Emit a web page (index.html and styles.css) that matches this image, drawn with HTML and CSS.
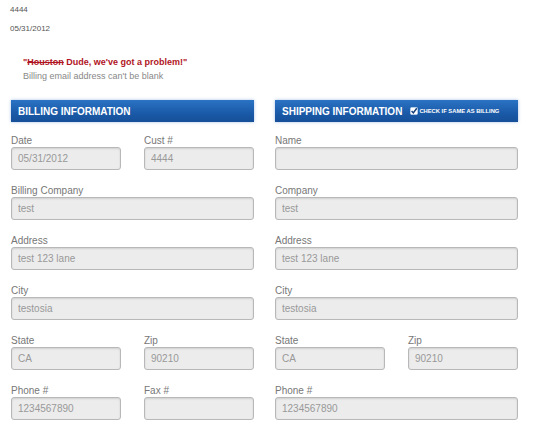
FILE: index.html
```html
<!DOCTYPE html>
<html>
<head>
<meta charset="utf-8">
<link rel="stylesheet" href="styles.css">
</head>
<body>
<div class="top">
  <div class="meta">4444</div>
  <div class="meta">05/31/2012</div>
</div>
<div class="error">
  <div class="error-title">"<span class="strike">Houston</span> Dude, we've got a problem!"</div>
  <div class="error-msg">Billing email address can't be blank</div>
</div>
<div class="columns">
  <section class="col">
    <div class="header"><span class="htitle">BILLING INFORMATION</span></div>
    <div class="fields">
      <div class="row two">
        <div class="field"><label>Date</label><div class="input">05/31/2012</div></div>
        <div class="field"><label>Cust #</label><div class="input">4444</div></div>
      </div>
      <div class="field"><label>Billing Company</label><div class="input">test</div></div>
      <div class="field"><label>Address</label><div class="input">test 123 lane</div></div>
      <div class="field"><label>City</label><div class="input">testosia</div></div>
      <div class="row two">
        <div class="field"><label>State</label><div class="input">CA</div></div>
        <div class="field"><label>Zip</label><div class="input">90210</div></div>
      </div>
      <div class="row two">
        <div class="field"><label>Phone #</label><div class="input">1234567890</div></div>
        <div class="field"><label>Fax #</label><div class="input"></div></div>
      </div>
    </div>
  </section>
  <section class="col">
    <div class="header">
      <span class="htitle">SHIPPING INFORMATION</span>
      <span class="same">
        <svg class="cb" width="8" height="8" viewBox="0 0 8 8"><rect x="0.5" y="0.5" width="7" height="7" rx="1" fill="#fff" stroke="#cfe0f5" stroke-width="0.6"/><path d="M1.6 4.1 L3.3 5.9 L6.8 1.2" fill="none" stroke="#173f7a" stroke-width="1.5"/></svg>
        CHECK IF SAME AS BILLING
      </span>
    </div>
    <div class="fields">
      <div class="field"><label>Name</label><div class="input"></div></div>
      <div class="field"><label>Company</label><div class="input">test</div></div>
      <div class="field"><label>Address</label><div class="input">test 123 lane</div></div>
      <div class="field"><label>City</label><div class="input">testosia</div></div>
      <div class="row two">
        <div class="field"><label>State</label><div class="input">CA</div></div>
        <div class="field"><label>Zip</label><div class="input">90210</div></div>
      </div>
      <div class="field"><label>Phone #</label><div class="input">1234567890</div></div>
    </div>
  </section>
</div>
</body>
</html>
```
FILE: styles.css
```css
html, body {
  margin: 0;
  padding: 0;
  background: #fff;
}
body {
  font-family: "Liberation Sans", Arial, sans-serif;
  width: 540px;
  height: 436px;
  overflow: hidden;
}
.top {
  padding: 5px 10px 0 10px;
}
.meta {
  font-size: 8px;
  line-height: 10px;
  color: #555;
  margin-bottom: 9px;
}
.error {
  padding: 13px 0 0 23px;
  height: 47px;
  box-sizing: border-box;
}
.error-title {
  color: #b0141e;
  font-weight: bold;
  font-size: 9px;
  line-height: 12px;
}
.strike {
  text-decoration: line-through;
}
.error-msg {
  color: #888;
  font-size: 9px;
  line-height: 11px;
  margin-top: 3px;
}
.columns {
  display: grid;
  grid-template-columns: 243px 243px;
  column-gap: 21px;
  margin: 10px 0 0 11px;
}
.header {
  height: 22px;
  background: linear-gradient(#2b73c4, #1a5aa8 60%, #164f98);
  box-shadow: 0 0 3px rgba(60, 120, 200, 0.45);
  display: flex;
  align-items: center;
  padding-left: 7px;
  color: #fff;
}
.htitle {
  font-size: 10px;
  font-weight: bold;
  letter-spacing: 0;
}
.same {
  display: flex;
  align-items: center;
  margin-left: 8px;
  font-size: 5.8px;
  font-weight: bold;
  gap: 1px;
}
.cb {
  display: block;
}
.fields {
  display: flex;
  flex-direction: column;
  gap: 15px;
  padding-top: 13px;
}
.row.two {
  display: grid;
  grid-template-columns: 110px 110px;
  column-gap: 23px;
}
.field {
  display: flex;
  flex-direction: column;
}
label {
  font-size: 10px;
  line-height: 12px;
  color: #777;
  margin-bottom: 0;
}
.input {
  height: 23px;
  box-sizing: border-box;
  border: 1px solid #b8b8b8;
  border-radius: 3px;
  background: #ececec;
  box-shadow: inset 0 1px 2px rgba(0,0,0,0.12), 0 1px 0 rgba(255,255,255,0.8);
  font-size: 10px;
  line-height: 21px;
  color: #999;
  padding-left: 6px;
}
```
